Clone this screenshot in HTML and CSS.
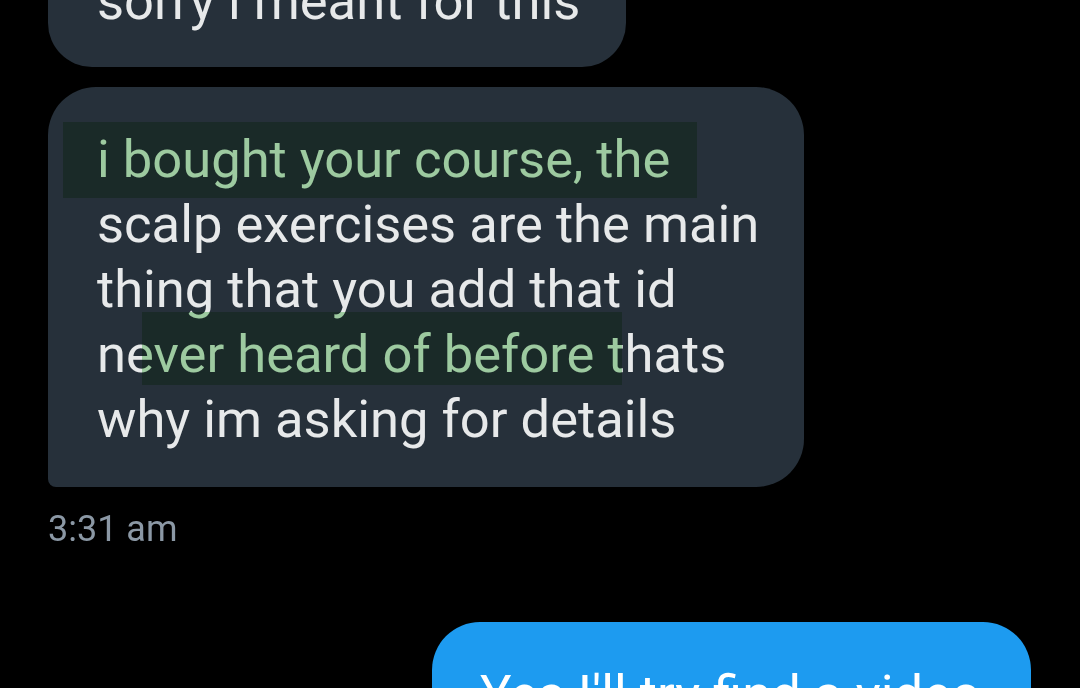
FILE: index.html
```html
<!DOCTYPE html>
<html>
<head>
<meta charset="utf-8">
<link rel="stylesheet" href="styles.css">
</head>
<body>
<main class="thread">
  <div class="bubble in first">sorry i meant for this</div>
  <div class="bubble in second">
    i bought your course, the<br>
    scalp exercises are the main<br>
    thing that you add that id<br>
    never heard of before thats<br>
    why im asking for details
    <span class="mark mark-one"></span>
    <span class="mark mark-two"></span>
  </div>
  <div class="time">3:31 am</div>
  <div class="bubble out">Yes I'll try find a video</div>
</main>
</body>
</html>
```
FILE: styles.css
```css
html, body {
  margin: 0;
  padding: 0;
  background: #000;
  height: 688px;
  overflow: hidden;
}

.thread {
  display: flex;
  flex-direction: column;
  align-items: flex-start;
  padding: 0 49px 0 48px;
  margin-top: -60px;
  font-family: Roboto, "Noto Sans", sans-serif;
}

.bubble {
  font-size: 52.5px;
  line-height: 65px;
  white-space: nowrap;
  box-sizing: border-box;
  position: relative;
}

.in {
  background: #26303a;
  color: #e7e9ea;
}

.first {
  width: 578px;
  padding: 29px 49px 33px;
  border-radius: 44px;
}

.second {
  width: 756px;
  margin-top: 20px;
  padding: 40px 49px 35px;
  border-radius: 48px 48px 48px 8px;
}

.mark {
  position: absolute;
  background: rgb(173, 221, 174);
  mix-blend-mode: multiply;
}

.mark-one {
  left: 15px;
  top: 35px;
  width: 634px;
  height: 76px;
}

.mark-two {
  left: 94px;
  top: 225px;
  width: 480px;
  height: 73px;
}

.time {
  margin-top: 22px;
  font-family: Roboto, "Liberation Sans", sans-serif;
  font-size: 36px;
  line-height: 40px;
  color: #8b98a5;
}

.out {
  align-self: flex-end;
  margin-top: 73px;
  width: 599px;
  background: #1d9bf0;
  color: #fff;
  padding: 40px 48px;
  border-radius: 48px 48px 8px 48px;
}
```
